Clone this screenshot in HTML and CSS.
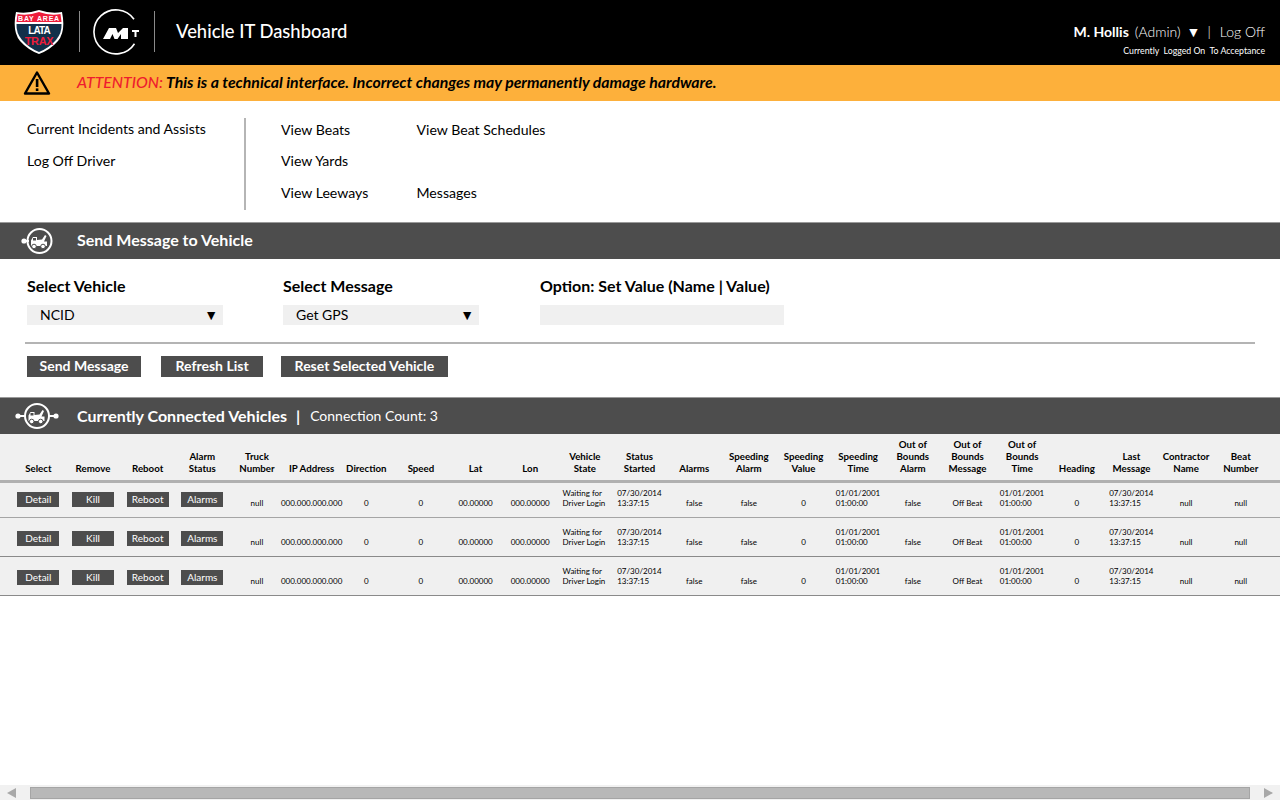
FILE: index.html
```html
<!DOCTYPE html>
<html lang="en">
<head>
<meta charset="utf-8">
<title>Vehicle IT Dashboard</title>
<link rel="stylesheet" href="styles.css">
</head>
<body>
<div class="page">
<main class="main">
  <header class="top">
    <svg class="logo-shield" width="52" height="46" viewBox="0 0 52 46">
      <path d="M3 3 Q14 5 26 1 Q38 5 49 3 Q53 22 45 32 Q37 41 26 45 Q15 41 7 32 Q-1 22 3 3Z" fill="#fff"/>
      <path d="M4.500 5 Q15 7 26 3 Q37 7 47.500 5 L48.500 13 H3.500Z" fill="#ee1c3a"/>
      <path d="M3.500 15 H48.500 Q49 24 43 31 Q36 39 26 43 Q16 39 9 31 Q3 24 3.500 15Z" fill="#12304a"/>
      <text x="26" y="11.500" class="lg-a">BAY AREA</text>
      <text x="26" y="24.500" class="lg-b">LATA</text>
      <text x="26" y="35.500" class="lg-c">TRAX</text>
    </svg>
    <span class="vr"></span>
    <svg class="logo-mt" width="46" height="46" viewBox="0 0 46 46">
      <path d="M41 10.300 A22 22 0 1 0 41.500 34.700" fill="none" stroke="#fff" stroke-width="1.600"/>
      <path d="M10 30 L16 19 H23 L25 24 L30 19 H35 V30 H28 V25 L24.500 30 H21.500 L19.500 25 L17 30Z" fill="#fff"/>
      <path d="M39 21 H46 V23 H43.500 V28 H41.500 V23 H39Z" fill="#fff"/>
    </svg>
    <span class="vr"></span>
    <h1 class="title">Vehicle IT Dashboard</h1>
    <div class="user">
      <div class="user-line"><b>M. Hollis</b><span class="role">(Admin)</span><span class="caret">▼</span><span class="pipe">|</span><span>Log Off</span></div>
      <div class="user-sub">Currently&nbsp; Logged On&nbsp; To Acceptance</div>
    </div>
  </header>

  <div class="banner">
    <svg width="28" height="26" viewBox="0 0 28 26"><path d="M14 2.500 L26 23.500 H2Z" fill="none" stroke="#000" stroke-width="2.400" stroke-linejoin="round"/><rect x="12.800" y="9" width="2.600" height="8" fill="#000"/><rect x="12.800" y="18.400" width="2.600" height="2.600" fill="#000"/></svg>
    <p class="banner-text"><span class="att">ATTENTION:</span> This is a technical interface. Incorrect changes may permanently damage hardware.</p>
  </div>

  <nav class="nav">
    <div class="nav-a">
      <a>Current Incidents and Assists</a>
      <a>Log Off Driver</a>
    </div>
    <div class="nav-b">
      <a>View Beats</a><a>View Beat Schedules</a>
      <a>View Yards</a><a></a>
      <a>View Leeways</a><a>Messages</a>
    </div>
  </nav>

  <section class="bar">
    <svg class="tow tow-send" width="34" height="28" viewBox="0 0 34 28">
      <circle cx="19.500" cy="14" r="12" fill="none" stroke="#fff" stroke-width="2"/>
      <circle cx="4" cy="14" r="2.600" fill="#fff"/><path d="M4 14 H9" stroke="#fff" stroke-width="2"/>
      <path d="M11 19 V13.500 L13 10 H17 V13 L22 12.500 L25 8 L26.500 9 L24 14.500 H27 V19Z" fill="#fff"/>
      <rect x="13" y="11" width="3" height="2.500" fill="#4d4d4d"/>
      <circle cx="14" cy="19.500" r="2.300" fill="#fff" stroke="#4d4d4d"/><circle cx="23" cy="19.500" r="2.300" fill="#fff" stroke="#4d4d4d"/>
    </svg>
    <h2 class="bar-title">Send Message to Vehicle</h2>
  </section>

  <section class="form">
    <div class="fields">
      <div class="field f1"><label>Select Vehicle</label><div class="select">NCID<span>▼</span></div></div>
      <div class="field f2"><label>Select Message</label><div class="select">Get GPS<span>▼</span></div></div>
      <div class="field f3"><label>Option: Set Value (Name | Value)</label><div class="input"></div></div>
    </div>
    <hr class="rule">
    <div class="buttons">
      <button>Send Message</button><button>Refresh List</button><button>Reset Selected Vehicle</button>
    </div>
  </section>

  <section class="bar">
    <svg class="tow tow-conn" width="46" height="28" viewBox="0 0 46 28">
      <circle cx="23" cy="14" r="12" fill="none" stroke="#fff" stroke-width="2"/>
      <circle cx="4" cy="14" r="2.600" fill="#fff"/><circle cx="42" cy="14" r="2.600" fill="#fff"/>
      <path d="M4 14 H11 M35 14 H42" stroke="#fff" stroke-width="2"/>
      <path d="M14.500 19 V13.500 L16.500 10 H20.500 V13 L25.500 12.500 L28.500 8 L30 9 L27.500 14.500 H30.500 V19Z" fill="#fff"/>
      <rect x="16.500" y="11" width="3" height="2.500" fill="#4d4d4d"/>
      <circle cx="17.700" cy="19.500" r="2.300" fill="#fff" stroke="#4d4d4d"/><circle cx="26.700" cy="19.500" r="2.300" fill="#fff" stroke="#4d4d4d"/>
    </svg>
    <h2 class="bar-title">Currently Connected Vehicles<span class="sep">|</span></h2>
    <span class="count">Connection Count: 3</span>
  </section>

  <section class="table">
    <div class="grid head">
      <div>Select</div><div>Remove</div><div>Reboot</div><div>Alarm<br>Status</div><div>Truck<br>Number</div><div>IP Address</div><div>Direction</div><div>Speed</div><div>Lat</div><div>Lon</div><div>Vehicle<br>State</div><div>Status<br>Started</div><div>Alarms</div><div>Speeding<br>Alarm</div><div>Speeding<br>Value</div><div>Speeding<br>Time</div><div>Out of<br>Bounds<br>Alarm</div><div>Out of<br>Bounds<br>Message</div><div>Out of<br>Bounds<br>Time</div><div>Heading</div><div>Last<br>Message</div><div>Contractor<br>Name</div><div>Beat<br>Number</div>
    </div>
    <div class="grid row first">
      <div class="act"><button>Detail</button></div><div class="act"><button>Kill</button></div><div class="act"><button>Reboot</button></div><div class="act"><button>Alarms</button></div><div>null</div><div class="ip">000.000.000.000</div><div>0</div><div>0</div><div>00.00000</div><div>000.00000</div><div class="two">Waiting for<br>Driver Login</div><div class="two">07/30/2014<br>13:37:15</div><div>false</div><div>false</div><div>0</div><div class="two">01/01/2001<br>01:00:00</div><div>false</div><div>Off Beat</div><div class="two">01/01/2001<br>01:00:00</div><div>0</div><div class="two">07/30/2014<br>13:37:15</div><div>null</div><div>null</div>
    </div>
    <div class="grid row">
      <div class="act"><button>Detail</button></div><div class="act"><button>Kill</button></div><div class="act"><button>Reboot</button></div><div class="act"><button>Alarms</button></div><div>null</div><div class="ip">000.000.000.000</div><div>0</div><div>0</div><div>00.00000</div><div>000.00000</div><div class="two">Waiting for<br>Driver Login</div><div class="two">07/30/2014<br>13:37:15</div><div>false</div><div>false</div><div>0</div><div class="two">01/01/2001<br>01:00:00</div><div>false</div><div>Off Beat</div><div class="two">01/01/2001<br>01:00:00</div><div>0</div><div class="two">07/30/2014<br>13:37:15</div><div>null</div><div>null</div>
    </div>
    <div class="grid row">
      <div class="act"><button>Detail</button></div><div class="act"><button>Kill</button></div><div class="act"><button>Reboot</button></div><div class="act"><button>Alarms</button></div><div>null</div><div class="ip">000.000.000.000</div><div>0</div><div>0</div><div>00.00000</div><div>000.00000</div><div class="two">Waiting for<br>Driver Login</div><div class="two">07/30/2014<br>13:37:15</div><div>false</div><div>false</div><div>0</div><div class="two">01/01/2001<br>01:00:00</div><div>false</div><div>Off Beat</div><div class="two">01/01/2001<br>01:00:00</div><div>0</div><div class="two">07/30/2014<br>13:37:15</div><div>null</div><div>null</div>
    </div>
  </section>
</main>
<div class="hscroll">
  <span class="arrow-l"></span>
  <span class="thumb"></span>
  <span class="arrow-r"></span>
</div>
</div>
</body>
</html>
```
FILE: styles.css
```css
* { box-sizing: border-box; }
html, body { margin: 0; height: 100%; overflow: hidden; }
body { font-family: Lato, "Liberation Sans", sans-serif; color: #000; background: #fff; }
.page { height: 800px; display: flex; flex-direction: column; }
.main { flex: 1; min-height: 0; }
h1, h2, p { margin: 0; }

.top { height: 65px; background: #000; color: #fff; display: flex; align-items: center; padding-left: 13px; }
.logo-shield { margin-top: -1px; }
.lg-a, .lg-b, .lg-c { text-anchor: middle; font-family: "Liberation Sans", sans-serif; font-weight: 700; }
.lg-a { font-size: 7px; fill: #fff; letter-spacing: .8px; }
.lg-b { font-size: 10px; fill: #fff; letter-spacing: -.9px; }
.lg-c { font-size: 11px; fill: #ee1c3a; letter-spacing: -.3px; }
.vr { width: 1px; height: 41px; background: #8a8a8a; margin-top: -2px; }
.logo-shield + .vr { margin-left: 14px; margin-right: 13px; }
.logo-mt { margin-right: 15px; margin-top: -2px; }
.title { font-size: 18.4px; font-weight: 500; margin-left: 21px; margin-top: -4px; white-space: nowrap; }
.user { margin-left: auto; padding-right: 15px; text-align: right; margin-top: 14px; }
.user-line { font-size: 14px; font-weight: 300; line-height: 17px; display: flex; justify-content: flex-end; align-items: center; }
.user-line b { font-weight: 700; }
.role { margin-left: 6px; }
.caret { margin-left: 6px; font-size: 14px; font-weight: 400; }
.pipe { margin: 0 9px 0 7px; }
.user-sub { font-size: 8.75px; line-height: 11px; margin-top: 5px; white-space: nowrap; }

.banner { height: 36px; background: #fdb03b; display: flex; align-items: center; padding-left: 23px; }
.banner-text { font-size: 15.8px; font-weight: 700; font-style: italic; margin-left: 26px; margin-top: -3px; white-space: nowrap; }
.att { color: #ee1c2e; font-weight: 500; }

.nav { height: 121px; display: flex; font-size: 14.1px; padding: 17px 0 0 27px; }
.nav a { display: block; white-space: nowrap; }
.nav-a { width: 219px; height: 92px; border-right: 2px solid #b5b5b5; display: flex; flex-direction: column; gap: 14px; line-height: 18px; padding-top: 2px; }
.nav-b { margin-left: 35px; display: grid; grid-template-columns: 135.5px auto; grid-auto-rows: 18px; row-gap: 13.25px; padding-top: 3px; }

.bar { height: 37px; background: #4d4d4d; border-top: 1px solid #9a9a9a; color: #fff; display: flex; align-items: center; }
.tow { flex: none; }
.tow-send { margin-left: 20px; margin-right: 23px; }
.tow-conn { margin-left: 14px; margin-right: 17px; }
.bar-title { font-size: 16px; font-weight: 700; white-space: nowrap; margin-top: -2px; }
.tow-send + .bar-title { margin-top: -4px; }
.sep { margin-left: 9px; }
.count { font-size: 14px; margin-left: 10px; white-space: nowrap; margin-top: -1px; }

.form { height: 138px; padding: 17px 25px 0 25px; }
.fields { display: flex; }
.field label { display: block; font-size: 16px; font-weight: 700; line-height: 19px; padding-left: 2px; white-space: nowrap; }
.f1 { width: 256px; } .f2 { width: 257px; }
.select, .input { background: #f0f0f0; height: 20px; margin-top: 10px; margin-left: 2px; font-size: 14px; line-height: 20px; padding-left: 13px; position: relative; width: 196px; }
.select span { position: absolute; right: 5px; top: 0; font-size: 14px; }
.input { width: 244px; }
.rule { border: 0; border-top: 2px solid #b4b4b4; margin: 17px 0 0; width: 1230px; }
.buttons { display: flex; gap: 20px; padding: 12px 0 0 2px; }
.buttons button { background: #4d4d4d; color: #fff; border: 0; height: 21px; font: 700 14px/19px Lato, sans-serif; padding: 0 12.5px 2px; white-space: nowrap; }
.buttons button:nth-child(2) { padding: 0 14.5px 2px; }
.buttons button:nth-child(3) { margin-left: -2px; padding: 0 13.5px 2px; }

.table { background: #f0f0f0; font-size: 9px; }
.grid { display: grid; grid-template-columns: repeat(23, 54.67px); padding-left: 11px; text-align: center; }
.grid > div { white-space: nowrap; }
.head { height: 49px; align-items: end; font-weight: 700; line-height: 12px; border-bottom: 3px solid #b0b0b0; padding-bottom: 6px; font-size: 9.7px; }
.row { height: 39px; border-bottom: 1px solid #8a8a8a; line-height: 10px; align-items: start; padding-top: 19px; font-size: 8px; }
.row.first { height: 35px; border-bottom-color: #a5a5a5; padding-top: 15px; }
.row > .two { text-align: left; padding-left: 5px; margin-top: -10px; }
.row > .act { margin-top: -6px; }
.row > .ip { margin: 0 -6px; }
.act button { width: 42px; height: 15px; background: #4d4d4d; color: #fff; border: 0; padding: 0; font: 400 10px/15px Lato, sans-serif; display: block; margin: 0 auto; }

.hscroll { height: 15px; background: #f1f1f1; display: flex; align-items: center; padding: 0 5px 0 7px; flex: none; }
.arrow-l { width: 0; height: 0; border: 5px solid transparent; border-left: 0; border-right: 9px solid #a8a8a8; }
.thumb { height: 12px; width: 1220px; margin-left: 14px; background: #b8b8b8; border: 1px solid #a5a5a5; }
.arrow-r { width: 0; height: 0; border: 5px solid transparent; border-right: 0; border-left: 9px solid #a8a8a8; margin-left: 14px; }
```
